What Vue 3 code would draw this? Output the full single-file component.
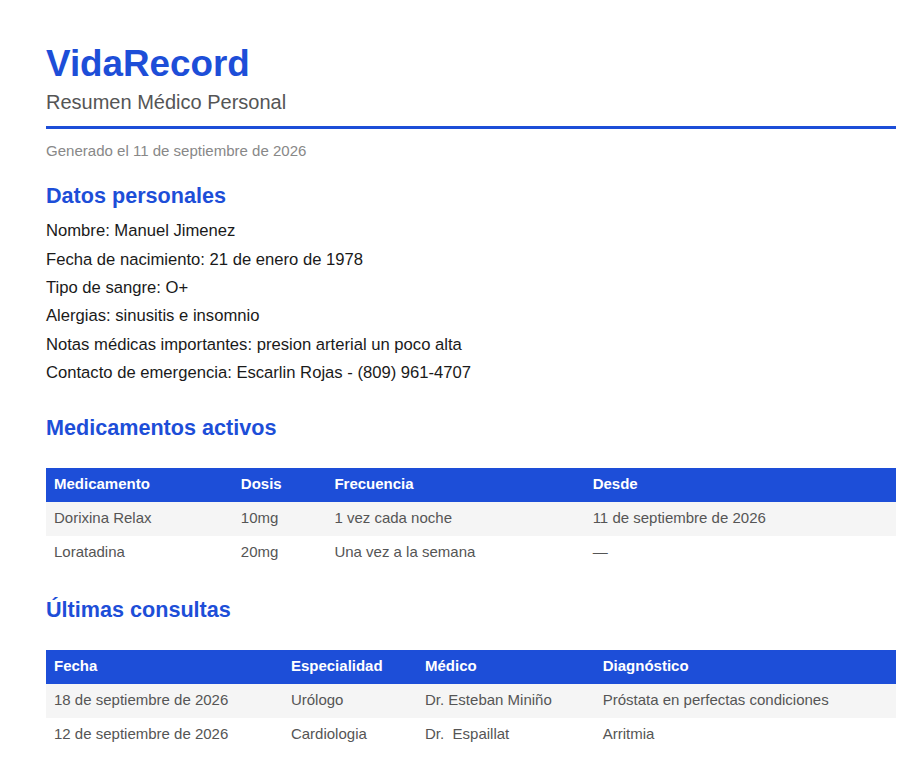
<script setup>
const personal = [
  "Nombre: Manuel Jimenez",
  "Fecha de nacimiento: 21 de enero de 1978",
  "Tipo de sangre: O+",
  "Alergias: sinusitis e insomnio",
  "Notas médicas importantes: presion arterial un poco alta",
  "Contacto de emergencia: Escarlin Rojas - (809) 961-4707"
]

const medications = [
  ["Dorixina Relax", "10mg", "1 vez cada noche", "11 de septiembre de 2026"],
  ["Loratadina", "20mg", "Una vez a la semana", "—"]
]

const visits = [
  ["18 de septiembre de 2026", "Urólogo", "Dr. Esteban Miniño", "Próstata en perfectas condiciones"],
  ["12 de septiembre de 2026", "Cardiologia", "Dr.  Espaillat", "Arritmia"]
]
</script>

<template>
  <main class="page">
    <header class="header">
      <h1>VidaRecord</h1>
      <p class="subtitle">Resumen Médico Personal</p>
    </header>
    <p class="generated">Generado el 11 de septiembre de 2026</p>

    <h2>Datos personales</h2>
    <p v-for="line in personal" :key="line" class="line">{{ line }}</p>

    <h2 class="spaced">Medicamentos activos</h2>
    <table>
      <thead>
        <tr>
          <th>Medicamento</th>
          <th>Dosis</th>
          <th>Frecuencia</th>
          <th>Desde</th>
        </tr>
      </thead>
      <tbody>
        <tr v-for="row in medications" :key="row[0]">
          <td v-for="cell in row" :key="cell">{{ cell }}</td>
        </tr>
      </tbody>
    </table>

    <h2 class="spaced last">Últimas consultas</h2>
    <table>
      <thead>
        <tr>
          <th>Fecha</th>
          <th>Especialidad</th>
          <th>Médico</th>
          <th>Diagnóstico</th>
        </tr>
      </thead>
      <tbody>
        <tr v-for="row in visits" :key="row[0]">
          <td v-for="cell in row" :key="cell">{{ cell }}</td>
        </tr>
      </tbody>
    </table>
  </main>
</template>

<style scoped>
.page {
  box-sizing: border-box;
  width: 921px;
  padding: 40px 25px 0 46px;
  font-family: "Liberation Sans", Arial, sans-serif;
  color: #1a1a1a;
}

.header {
  border-bottom: 3px solid #1d4ed8;
  padding-bottom: 9px;
}

h1 {
  margin: 0;
  font-size: 36.8px;
  line-height: 47px;
  font-weight: 700;
  color: #1d4ed8;
}

.subtitle {
  margin: 0;
  font-size: 20px;
  line-height: 30px;
  color: #555;
}

.generated {
  margin: 11px 0 0;
  font-size: 15.04px;
  line-height: 22px;
  color: #888;
}

h2 {
  margin: 18px 0 5.2px;
  font-size: 21.6px;
  line-height: 32px;
  font-weight: 700;
  color: #1d4ed8;
}

h2.spaced {
  margin: 24.8px 0 24px;
}

h2.last {
  margin-top: 24px;
}

.line {
  margin: 0;
  font-size: 16.64px;
  line-height: 28.4px;
}

table {
  width: 100%;
  border-collapse: collapse;
  font-size: 15px;
  line-height: 20px;
}

th {
  background: #1d4ed8;
  color: #fff;
  text-align: left;
  font-weight: 700;
  padding: 6px 8px 8px;
}

td {
  padding: 6px 8px 8px;
  color: #555;
  white-space: pre-wrap;
}

tbody tr:nth-child(odd) td {
  background: #f5f5f5;
}
</style>
